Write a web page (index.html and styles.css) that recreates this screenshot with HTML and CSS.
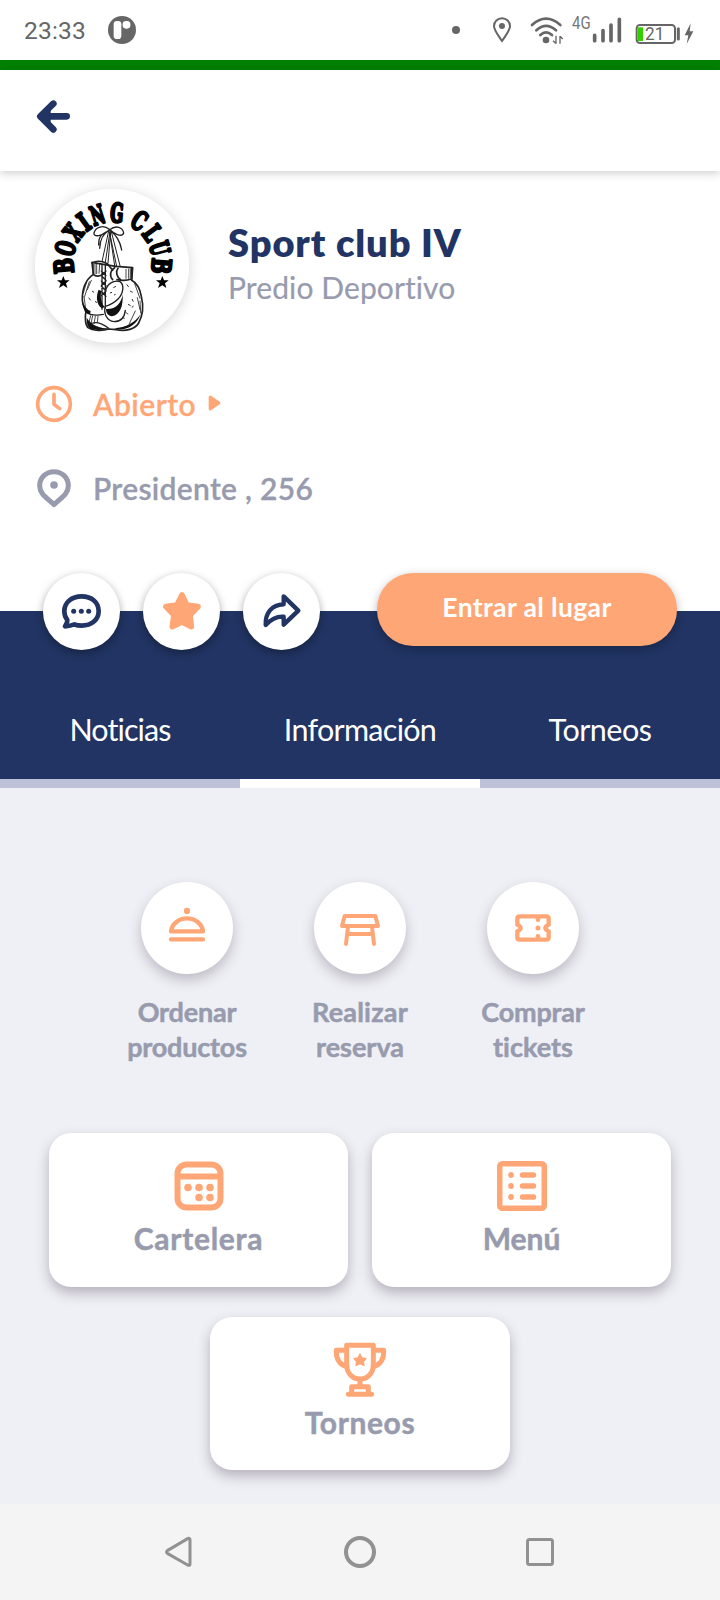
FILE: index.html
```html
<!DOCTYPE html>
<html lang="es">
<head>
<meta charset="utf-8">
<meta name="viewport" content="width=device-width">
<title>Sport club IV</title>
<link rel="stylesheet" href="styles.css">
</head>
<body>
<div class="status">
  <span class="time">23:33</span>
  <svg class="app-badge" viewBox="324 48 84 84" width="28" height="28"><circle cx="366" cy="90" r="42" fill="#666"/><rect x="341" y="63" width="23" height="54" rx="10" fill="#fff"/><rect x="368" y="63" width="23" height="23" rx="10" fill="#fff"/></svg>
  <svg class="status-icons" viewBox="270 30 735 120" width="245" height="40" fill="none" stroke="#666">
    <circle cx="288" cy="90" r="12" fill="#666" stroke="none"/>
    <path d="M426 123C414 105 402 91 402 78a24 23 0 0 1 48 0c0 13-12 27-24 45z" stroke-width="6"/>
    <circle cx="426" cy="78" r="9" fill="#666" stroke="none"/>
    <path d="M516 75Q558 37 601 75M529 91Q558 64 588 91M541 105Q558 89 576 105" stroke-width="8" stroke-linecap="round"/>
    <circle cx="558" cy="120" r="10" fill="#666" stroke="none"/>
    <path d="M588 107v24M579 122l8 8M600 131v-23M601 109l7 8" stroke-width="4"/>
    <text x="636" y="87" class="net" textLength="56" lengthAdjust="spacingAndGlyphs">4G</text>
    <path d="M704 106v16M729 92v30M753 75v47M778 58v64" stroke-width="11" stroke-linecap="round"/>
    <rect x="830" y="75" width="115" height="54" rx="10" stroke-width="6"/>
    <rect x="834" y="82" width="15" height="41" fill="#33d000" stroke="none"/>
    <text x="855" y="121" class="level" textLength="58" lengthAdjust="spacingAndGlyphs">21</text>
    <path d="M955 86v31" stroke-width="9" stroke-linecap="round"/>
    <path d="M992 70l-18 36h11l-5 26 20-38h-11z" fill="#666" stroke="none"/>
  </svg>
</div>
<div class="stripe"></div>
<header class="topbar">
  <svg viewBox="108 297 105 105" width="35" height="35" fill="none" stroke="#213463" stroke-width="20" stroke-linecap="round" stroke-linejoin="round"><path d="M200 349H124M160 311L121 349L160 388"/><path d="M128 349l22-22v44z" fill="#213463" stroke-width="4"/></svg>
</header>
<main class="place">
  <section class="profile">
    <svg class="logo" viewBox="45 44 462 462" width="154" height="154">
      <circle cx="276" cy="275" r="231" fill="#fff"/>
      <g class="arch">
        <text transform="translate(278 262) rotate(-95) translate(0 -119) scale(.70 1)">B</text>
        <text transform="translate(278 262) rotate(-74) translate(0 -119) scale(.62 1)">O</text>
        <text transform="translate(278 262) rotate(-53) translate(0 -119) scale(.64 1)">X</text>
        <text transform="translate(278 262) rotate(-36) translate(0 -119) scale(.70 1)">I</text>
        <text transform="translate(278 262) rotate(-18) translate(0 -119) scale(.58 1)">N</text>
        <text transform="translate(278 262) rotate(5) translate(0 -119) scale(.60 1)">G</text>
        <text transform="translate(278 262) rotate(33) translate(0 -119) scale(.64 1)">C</text>
        <text transform="translate(278 262) rotate(54) translate(0 -119) scale(.66 1)">L</text>
        <text transform="translate(278 262) rotate(74) translate(0 -119) scale(.58 1)">U</text>
        <text transform="translate(278 262) rotate(95) translate(0 -119) scale(.70 1)">B</text>
      </g>
      <path d="M130 305l5 13h14l-11 9 4 14-12-8-13 8 5-14-11-9h14zM427 305l5 13h14l-11 9 4 14-12-8-13 8 5-14-11-9h14z"/>
      <g fill="none" stroke="#222" stroke-width="4" stroke-linecap="round" stroke-linejoin="round">
        <path d="M268 165C250 150 226 158 222 176c-2 14 24 10 46-9C290 150 308 160 311 176c-4 14-28 4-43-11M266 168C248 180 240 194 239 222M270 168C290 182 300 200 305 227M264 170C234 182 236 200 236 212"/>
        <path d="M266 170L246 262M270 172L256 264M272 172L264 266M268 172L290 276M274 172L300 274M270 180L284 274" stroke-width="3"/>
        <path d="M216 264l4 36c-20 14-34 42-33 78 0 16 6 24 11 32-4 20-2 42 6 50 14 10 46 10 62 4l22 2c30 6 58-2 68-20 14-26 14-56 8-80-4-24-14-40-29-48l3-38-50-4-38-6-34-6z" fill="#fff" stroke-width="5"/>
        <path d="M216 266c14-8 30-6 46 2l16 20M222 302c10 6 20 4 28-4M284 280c-14 8-16 26-6 36M294 282c-8 10-4 26 8 34M335 282v32c-12 4-26 6-44 2" stroke-width="5"/>
        <path d="M246 270v135M256 272v130M244 290l14 14M244 304l14 14M244 320l14 14M244 336l14 14M244 352l14 14M258 290l-14 14M258 320l-14 14M258 350l-14 14" stroke-width="4"/>
        <path d="M256 352c4-24 26-36 44-30 14 10 10 36-6 52-10 10-24 18-38 22M256 396c-6 20 4 44 26 46 24 0 32-18 34-34M196 412c16 12 34 12 54 8M204 452c20-14 42-6 62 10"/>
        <path d="M221 270l-2 28M225 268v30M230 268v30M239 269l-2 28M326 284v28M331 284v28M318 285v27M200 322l-10 34M208 322l-14 44M214 318l-12 28M344 328l16 44M352 370l8 36M346 410l-18 38M212 424l-6 24M218 424l-6 28M226 426l-4 22M234 426l-2 18M192 366l4 30M360 380l2 36" stroke-width="2.5"/>
      </g>
      <path d="M236 346c-8 18-8 44 10 56l8-4c-10-12-14-30-10-48zM308 360c-4 28-22 46-50 44 0 12 6 20 18 22 24-4 34-30 32-66zM188 384c2 26 10 36 22 36l2-10c-10-2-16-12-24-26zM200 430c0 20 4 30 14 34 12 4 38 4 52-2-22 0-50-6-66-32zM282 462c34 10 66-6 80-42-16 24-44 40-80 42z" fill="#111"/>
      <path d="M320 330l6 8M330 350l8 4M336 374l4 8M324 390l8 4M318 414l6 6M280 340l8-4M270 356l6-2M282 362l5-2M206 370l6 8M216 350l6 4M226 380l4 6M306 430l8 2M340 394l-4 6" stroke="#333" stroke-width="3"/>
    </svg>
    <div class="names">
      <h1 class="name">Sport club IV</h1>
      <p class="kind">Predio Deportivo</p>
    </div>
  </section>
  <section class="facts">
    <div class="fact open">
      <svg viewBox="45 74 114 114" width="38" height="38" fill="none" stroke="#ffa677"><circle cx="102" cy="131" r="49" stroke-width="11"/><path d="M102 102v30l17 13" stroke-width="11" stroke-linecap="round" stroke-linejoin="round"/></svg>
      <span class="open-text">Abierto</span>
      <svg class="caret" viewBox="563 104 38 48" width="13" height="16"><path d="M569 110v36l26-18z" fill="#ffa677" stroke="#ffa677" stroke-width="9" stroke-linejoin="round"/></svg>
    </div>
    <div class="fact">
      <svg viewBox="45 326 114 117" width="38" height="39"><path d="M102 334c-24 0-43 18-43 42 0 25 21 36 43 57 22-21 43-32 43-57 0-24-19-42-43-42z" fill="none" stroke="#979bad" stroke-width="15" stroke-linejoin="round"/><circle cx="102" cy="374" r="11.5" fill="#979bad"/></svg>
      <span class="address">Presidente , 256</span>
    </div>
  </section>
</main>
<section class="banner">
  <div class="actions">
    <button class="round"><svg viewBox="119 125 129 114" width="43" height="38" fill="none" stroke="#213463" stroke-width="14" stroke-linejoin="round"><path d="M184 138c-30 0-52 18-52 44 0 12 4 21 9 27 1 7-3 12-7 19 12 0 20-3 28-6 7 3 14 4 22 4 30 0 51-18 51-44s-21-44-51-44z"/><g fill="#213463" stroke="none"><circle cx="160" cy="183" r="7.5"/><circle cx="183" cy="183" r="7.5"/><circle cx="205" cy="183" r="7.5"/></g></svg></button>
    <button class="round"><svg viewBox="423 123 120 120" width="40" height="40"><path d="M483 135L497 165L531 170L507 195L511 230L483 216L454 230L459 195L435 170L468 165Z" fill="#ffa677" stroke="#ffa677" stroke-width="17" stroke-linejoin="round"/></svg></button>
    <button class="round"><svg viewBox="723 127 120 111" width="40" height="37" fill="none" stroke="#213463" stroke-width="13" stroke-linejoin="round"><path d="M788 140L832 183L788 225V201C764 199 748 211 734 226C732 190 752 165 788 164Z"/></svg></button>
    <button class="enter"><span>Entrar al lugar</span></button>
  </div>
  <nav class="tabs">
    <a class="tab"><span class="t-news">Noticias</span></a>
    <a class="tab active"><span class="t-info">Información</span></a>
    <a class="tab"><span class="t-cups">Torneos</span></a>
  </nav>
</section>
<section class="content">
  <div class="services">
    <div class="service">
      <div class="disc"><svg viewBox="162 135 138 138" width="46" height="46" fill="none" stroke="#ffa677" stroke-width="13" stroke-linecap="round" stroke-linejoin="round"><circle cx="231" cy="153" r="9.500" fill="#ffa677" stroke="none"/><path d="M183 214C186 191 207 175 231 175S276 191 279 214ZM183 238H279"/></svg></div>
      <p><span class="l-order">Ordenar</span><br><span class="l-products">productos</span></p>
    </div>
    <div class="service">
      <div class="disc"><svg viewBox="681 135 138 138" width="46" height="46" fill="none" stroke="#ffa677" stroke-width="12" stroke-linecap="round" stroke-linejoin="round"><path d="M704 168H796L804 198H696ZM714 200L708 252M786 200L792 252M712 222H788"/></svg></div>
      <p><span class="l-make">Realizar</span><br><span class="l-booking">reserva</span></p>
    </div>
    <div class="service">
      <div class="disc"><svg viewBox="1200 135 138 138" width="46" height="46" fill="none" stroke="#ffa677" stroke-width="13" stroke-linejoin="round"><path d="M1229 169H1309Q1316 169 1316 176V194C1303 199 1303 209 1316 214V232Q1316 239 1309 239H1229Q1222 239 1222 232V214C1235 209 1235 199 1222 194V176Q1222 169 1229 169Z"/><g fill="#ffa677" stroke="none"><circle cx="1284" cy="179" r="7"/><circle cx="1284" cy="204" r="7.500"/><circle cx="1284" cy="229" r="7"/></g></svg></div>
      <p><span class="l-buy">Comprar</span><br><span class="l-tickets">tickets</span></p>
    </div>
  </div>
  <div class="cards">
    <div class="card">
      <svg viewBox="0 0 50 50" width="50" height="50" fill="none" stroke="#ffa677" stroke-width="6"><rect x="3.500" y="3.500" width="43" height="43" rx="9"/><path d="M4 15.500H46"/><g fill="#ffa677" stroke="none"><circle cx="14" cy="26.500" r="3.800"/><circle cx="25" cy="26.500" r="3.800"/><circle cx="36" cy="26.500" r="3.800"/><circle cx="25" cy="36.500" r="3.800"/><circle cx="36" cy="36.500" r="3.800"/></g></svg>
      <span class="c-board">Cartelera</span>
    </div>
    <div class="card">
      <svg viewBox="0 0 50 50" width="50" height="50" fill="none" stroke="#ffa677" stroke-width="5.500" stroke-linecap="round"><rect x="2.750" y="2.750" width="44.500" height="44.500" rx="2.500"/><path d="M25.500 14H36.500M25.500 25H36.500M25.500 36H36.500"/><g fill="#ffa677" stroke="none"><circle cx="14" cy="14" r="2.900"/><circle cx="14" cy="25" r="2.900"/><circle cx="14" cy="36" r="2.900"/></g></svg>
      <span class="c-menu">Menú</span>
    </div>
    <div class="card wide">
      <svg viewBox="429 126 162 168" width="54" height="56" fill="none" stroke="#ffa677" stroke-width="15" stroke-linejoin="round"><path d="M470 136H550V194C550 219 533 237 510 237S470 219 470 194Z"/><path d="M470 151H439C438 175 447 193 470 200M550 151H581C582 175 573 193 550 200M510 238V260M485 282V260H535V282M475 283H545" stroke-linecap="round"/><path d="M510 162L516 174L528 176L520 185L522 196L510 191L498 196L500 185L492 176L504 174Z" fill="#ffa677" stroke-width="4"/></svg>
      <span class="c-cups">Torneos</span>
    </div>
  </div>
</section>
<footer class="sysnav">
  <svg viewBox="132 138 96 96" width="32" height="32" fill="none" stroke="#919191" stroke-width="9" stroke-linejoin="round"><path d="M203 146Q210 143 210 150V222Q210 228 203 225L142 190Q137 186 142 182Z"/></svg>
  <svg viewBox="672 138 96 96" width="32" height="32" fill="none" stroke="#919191" stroke-width="12"><circle cx="720" cy="186" r="42"/></svg>
  <svg viewBox="1212 138 96 96" width="32" height="32" fill="none" stroke="#919191" stroke-width="9"><rect x="1222.500" y="148.500" width="75" height="75" rx="6"/></svg>
</footer>
</body>
</html>
```
FILE: styles.css
```css
* { box-sizing: border-box; }
body {
  margin: 0;
  width: 720px;
  height: 1600px;
  overflow: hidden;
  display: flex;
  flex-direction: column;
  background: #fff;
  color: #979bad;
  font-family: Lato, "Open Sans", sans-serif;
  font-variant-ligatures: none;
}
h1, p { margin: 0; }
svg { display: block; flex: none; }
span { white-space: nowrap; }

.status { height: 60px; flex: none; display: flex; align-items: center; padding-left: 24px; }
.time { width: 84px; font: 400 24.5px/30px Roboto, sans-serif; letter-spacing: .2px; color: #666; padding-top: 2px; }
.status-icons { margin-left: 314px; }
.net { font: 54px Roboto, sans-serif; fill: #777; stroke: none; }
.level { font: 54px Roboto, sans-serif; fill: #666; stroke: none; }
.stripe { height: 10px; flex: none; background: #008000; }
.topbar { height: 101px; flex: none; padding: 29px 36px; background: #fff; box-shadow: 0 2px 9px rgba(0, 0, 0, .2); }

.place { height: 440px; flex: none; padding: 18px 35px 0; }
.profile { display: flex; height: 154px; gap: 39px; }
.logo { border-radius: 50%; box-shadow: 0 2px 14px rgba(0, 0, 0, .16); }
.arch { font: 700 78px "DejaVu Serif", serif; text-anchor: middle; fill: #000; stroke: #000; stroke-width: 8; stroke-linejoin: round; }
.names { padding-top: 30px; }
.name { font-size: 38px; line-height: 46px; font-weight: 800; color: #213463; letter-spacing: .9px; }
.kind { font-size: 30px; line-height: 44px; letter-spacing: .1px; -webkit-text-stroke: .2px; }
.facts { padding-top: 41px; }
.fact { display: flex; align-items: center; height: 40px; font-size: 30px; font-weight: 600; letter-spacing: .3px; }
.fact > span { margin-left: 20px; -webkit-text-stroke: .3px; }
.fact + .fact { margin-top: 44px; }
.open { color: #ffa677; letter-spacing: .45px; }
.caret { margin: -2px 0 0 12px; }

.banner { height: 177px; flex: none; background: #213463; }
.actions { display: flex; height: 77px; margin-top: -38px; padding: 0 43px; gap: 23px; }
button { border: 0; padding: 0; font-family: inherit; display: flex; align-items: center; justify-content: center; }
.round { width: 77px; height: 77px; padding-bottom: 2px; border-radius: 50%; background: #fff; box-shadow: 0 3px 9px rgba(0, 0, 0, .36); }
.enter { width: 300px; height: 73px; margin-left: 34px; border-radius: 36px; background: #ffa677; color: #fff; font-size: 26.5px; font-weight: 700; letter-spacing: .37px; font-variant-ligatures: none; padding-bottom: 6px; box-shadow: 0 3px 10px rgba(0, 0, 0, .28); }
.tabs { display: flex; height: 138px; }
.tab { flex: 1; display: flex; justify-content: center; align-items: center; padding-top: 28px; border-bottom: 9px solid #bdc2d9; color: #fff; font-size: 30.5px; letter-spacing: -.7px; }
.tab.active { border-color: #fff; }
.t-news { letter-spacing: -.9px; }
.t-cups { letter-spacing: -.5px; }

.content { height: 716px; flex: none; background: #eff0f6; padding-top: 94px; }
.services { display: flex; justify-content: center; height: 251px; }
.service { width: 173px; display: flex; flex-direction: column; align-items: center; }
.disc { width: 92px; height: 92px; border-radius: 50%; background: #fff; display: flex; align-items: center; justify-content: center; box-shadow: 0 6px 13px rgba(50, 30, 50, .26); }
.service p { margin-top: 20px; text-align: center; font-size: 27px; line-height: 35px; font-weight: 700; }
.l-order, .l-products, .l-buy { letter-spacing: -.2px; }
.l-make { letter-spacing: .2px; }
.cards { display: flex; flex-wrap: wrap; justify-content: center; gap: 30px 24px; }
.card { width: 299px; height: 154px; border-radius: 22px; background: #fff; display: flex; flex-direction: column; align-items: center; justify-content: flex-start; padding-top: 28px; box-shadow: 0 6px 13px rgba(50, 30, 50, .3); }
.card span { height: 40px; line-height: 40px; margin-top: 7px; font-size: 30px; font-weight: 700; }
.card.wide { width: 300px; height: 153px; padding-top: 25px; }
.card.wide span { margin-top: 4px; }
.service p, .card span { -webkit-text-stroke: .5px; }
.card .c-board { letter-spacing: .7px; }
.card .c-cups { letter-spacing: .6px; }

.sysnav { height: 96px; flex: none; display: flex; align-items: center; justify-content: center; gap: 148px; background: #f4f4f4; }
```
